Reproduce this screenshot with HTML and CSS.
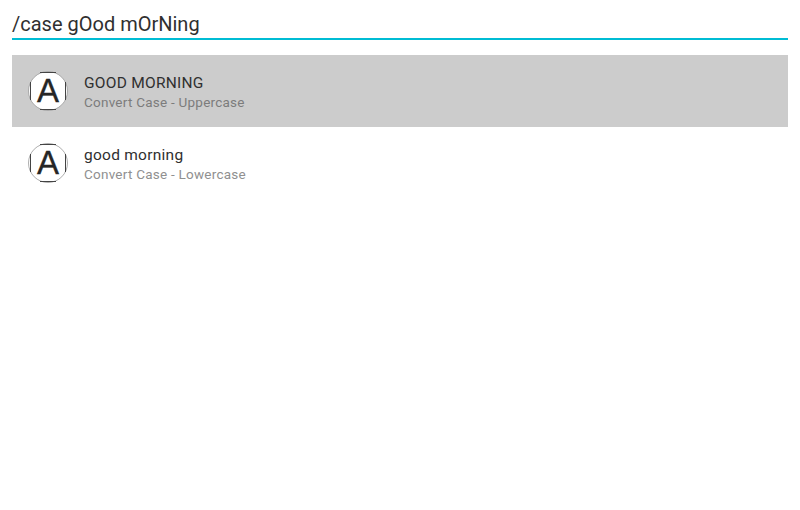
FILE: index.html
```html
<!DOCTYPE html>
<html lang="en">
<head>
<meta charset="utf-8">
<title>Convert Case</title>
<link rel="stylesheet" href="styles.css">
</head>
<body>
<div class="query">/case gOod mOrNing</div>
<ul class="results">
<li class="result selected">
<svg class="avatar" viewBox="0 0 40 40"><circle cx="20" cy="20" r="19.5" fill="#fff" stroke="#999" stroke-width=".8"/><path d="M2.5 11V29M37.5 11V29M12 1.5H28M12 38.5H28" stroke="#444" stroke-width="1"/><text class="letter" x="20" y="31.3">A</text></svg>
<div class="text"><div class="primary">GOOD MORNING</div><div class="secondary">Convert Case - Uppercase</div></div>
</li>
<li class="result">
<svg class="avatar" viewBox="0 0 40 40"><circle cx="20" cy="20" r="19.5" fill="#fff" stroke="#999" stroke-width=".8"/><path d="M2.5 11V29M37.5 11V29M12 1.5H28M12 38.5H28" stroke="#444" stroke-width="1"/><text class="letter" x="20" y="31.3">A</text></svg>
<div class="text"><div class="primary">good morning</div><div class="secondary">Convert Case - Lowercase</div></div>
</li>
</ul>
</body>
</html>
```

FILE: styles.css
```css
* { box-sizing: border-box; }
body { margin: 0; padding: 8px 12px; font-family: Roboto, sans-serif; background: #fff; color: #303030; }
.query { height: 32px; line-height: 32px; font-size: 20px; border-bottom: 2px solid #00bcd4; }
.results { list-style: none; margin: 15px 0 0; padding: 0; }
.result { display: flex; gap: 16px; height: 72px; padding: 16px; }
.selected { background: #ccc; }
.avatar { width: 40px; height: 40px; }
.letter { font: 33px "Liberation Sans", sans-serif; text-anchor: middle; fill: #262626; stroke: #262626; stroke-width: .3px; }
.primary { font-size: 15.5px; letter-spacing: .26px; line-height: 24px; }
.secondary { font-size: 13.5px; letter-spacing: .24px; line-height: 15px; color: #7c7c7c; }
.result:not(.selected) .secondary { color: #909090; }
```
